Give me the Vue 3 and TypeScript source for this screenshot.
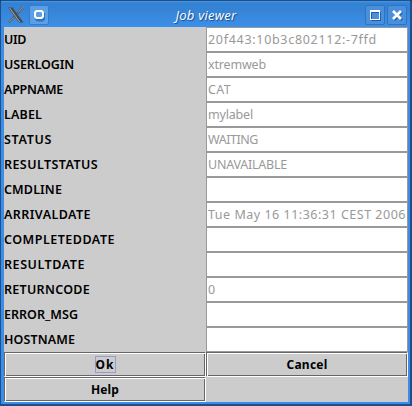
<script setup lang="ts">
import { nextTick, onMounted, ref } from 'vue'

interface Field {
  name: string
  nameWidth: number
  value: string
  valueWidth: number
}

const fields: Field[] = [
  { name: 'UID', nameWidth: 22, value: '20f443:10b3c802112:-7ffd', valueWidth: 169 },
  { name: 'USERLOGIN', nameWidth: 70, value: 'xtremweb', valueWidth: 58 },
  { name: 'APPNAME', nameWidth: 59, value: 'CAT', valueWidth: 23 },
  { name: 'LABEL', nameWidth: 38, value: 'mylabel', valueWidth: 45 },
  { name: 'STATUS', nameWidth: 48, value: 'WAITING', valueWidth: 50 },
  { name: 'RESULTSTATUS', nameWidth: 94, value: 'UNAVAILABLE', valueWidth: 79 },
  { name: 'CMDLINE', nameWidth: 58, value: '', valueWidth: 0 },
  { name: 'ARRIVALDATE', nameWidth: 87, value: 'Tue May 16 11:36:31 CEST 2006', valueWidth: 198 },
  { name: 'COMPLETEDDATE', nameWidth: 111, value: '', valueWidth: 0 },
  { name: 'RESULTDATE', nameWidth: 81, value: '', valueWidth: 0 },
  { name: 'RETURNCODE', nameWidth: 86, value: '0', valueWidth: 8 },
  { name: 'ERROR_MSG', nameWidth: 74, value: '', valueWidth: 0 },
  { name: 'HOSTNAME', nameWidth: 71, value: '', valueWidth: 0 },
]

const root = ref<HTMLElement | null>(null)

// Spreads the letters of each label so that it takes its nominal width.
function fitText(): void {
  root.value?.querySelectorAll<HTMLElement>('[data-width]').forEach((el) => {
    const wanted = Number(el.dataset.width)
    const count = el.textContent?.length ?? 0
    if (!wanted || !count) return
    el.style.letterSpacing = '0px'
    const natural = el.getBoundingClientRect().width
    el.style.letterSpacing = `${(wanted - natural) / count}px`
  })
}

onMounted(async () => {
  await nextTick()
  fitText()
})
</script>

<template>
  <div ref="root" class="window">
    <header class="titlebar">
      <svg class="logo" width="18" height="18" viewBox="0 0 18 18">
        <path d="M15.500 1.500 10.500 7.500M7.500 10.500 2 16.500" stroke="#555b63" stroke-width="2" />
        <path d="M1 1.500H5.500L16.500 16.500H12Z" fill="#454b52" />
        <path d="M2.500 1.800 12.800 16" stroke="#a6a6a0" stroke-width="1" />
        <path d="M15.800 1.200 11 6.500M7 11.200 2.200 16.200" stroke="#b0aaa0" stroke-width=".8" />
      </svg>
      <span class="tool">
        <svg width="18" height="18" viewBox="0 0 18 18">
          <path d="M7 5.500h6l2 2v6l-2 2H7l-2-2v-6z" fill="#2f73bd" />
          <path d="M6 4h6l2 2v5l-2 2H6l-2-2V6z" fill="#fff" />
          <path d="M7 6h4l1 1v3l-1 1H7l-1-1V7z" fill="#5b9fe6" />
        </svg>
      </span>
      <h1 class="title"><span data-width="61">Job viewer</span></h1>
      <span class="tool plain">
        <svg width="18" height="18" viewBox="0 0 18 18">
          <path d="M5.500 6.500h9v8h-9z" fill="none" stroke="#1c5ca5" />
          <path d="M4 4h10v10H4zM5 6v7h8V6z" fill="#fff" fill-rule="evenodd" />
        </svg>
      </span>
      <span class="tool plain">
        <svg width="18" height="18" viewBox="0 0 18 18">
          <path d="m6 6 8 8m0-8-8 8" stroke="#1c5ca5" stroke-width="2.500" />
          <path d="m5 5 8 8m0-8-8 8" stroke="#fff" stroke-width="2.700" />
        </svg>
      </span>
    </header>
    <main class="grid">
      <template v-for="field in fields" :key="field.name">
        <div class="name"><span :data-width="field.nameWidth">{{ field.name }}</span></div>
        <div class="value"><span :data-width="field.valueWidth">{{ field.value }}</span></div>
      </template>
      <button class="button"><span class="focus"><span data-width="19">Ok</span></span></button>
      <button class="button"><span data-width="41">Cancel</span></button>
      <button class="button"><span data-width="28">Help</span></button>
    </main>
  </div>
</template>

<style>
body {
  margin: 0;
  background: #16365e;
}
</style>

<style scoped>
.window {
  box-sizing: border-box;
  width: 412px;
  height: 406px;
  padding: 1px 2px 2px 1px;
  border-radius: 3px 3px 0 0;
  overflow: hidden;
  background: #1f4f8a;
  font-family: 'Noto Sans', 'Open Sans', sans-serif;
}

.titlebar {
  display: flex;
  align-items: center;
  box-sizing: border-box;
  height: 26px;
  padding: 3px 3px 2px 6px;
  background: linear-gradient(#4a96e4 0, #3381d3 2px, #3583d5 8px, #3d90e8 100%);
}

.logo {
  flex: none;
  margin-right: 4px;
}

.tool {
  display: flex;
  flex: none;
  align-items: center;
  justify-content: center;
  box-sizing: border-box;
  width: 20px;
  height: 20px;
  border: 1px solid #347bca;
  border-radius: 2px;
  background: #5b9fe6;
}

.tool.plain {
  margin-left: 2px;
  border-color: #2c74c2;
  background: #498fdb;
}

.title {
  flex: 1;
  margin: 0;
  padding: 1px 0 0;
  color: #fff;
  font-family: 'Open Sans', sans-serif;
  font-size: 13px;
  font-style: italic;
  font-weight: 400;
  line-height: 20px;
  text-align: center;
  text-shadow: 1px 1px 1px #184b86;
  white-space: pre;
}

.grid {
  display: grid;
  grid-template-columns: 202px 202px;
  grid-auto-rows: 25px;
  width: 404px;
  height: 375px;
  border: solid #3b8de7;
  border-width: 0 2px 2px 3px;
  background: #ccc;
}

.name,
.value {
  box-sizing: border-box;
  font-size: 12.5px;
  line-height: 25px;
  white-space: pre;
}

.name {
  color: #000;
  font-weight: 600;
}

.value {
  padding-left: 1px;
  border: 1px solid #999;
  background: #fff;
  color: #999;
  line-height: 23px;
}

.button {
  position: relative;
  display: flex;
  align-items: center;
  justify-content: center;
  margin: 0;
  padding: 0;
  border: 0;
  background: #ccc;
  color: #000;
  font: 700 12px / 16px 'Noto Sans', 'Open Sans', sans-serif;
}

.button::before,
.button::after {
  position: absolute;
  border: 1px solid #666;
  content: '';
}

.button::before {
  inset: 0 1px 1px 0;
}

.button::after {
  inset: 1px 0 0 1px;
  border-color: #fff;
}

.focus {
  box-sizing: border-box;
  height: 17px;
  padding: 0;
  border: 1px solid #99c;
  line-height: 15px;
}
</style>
